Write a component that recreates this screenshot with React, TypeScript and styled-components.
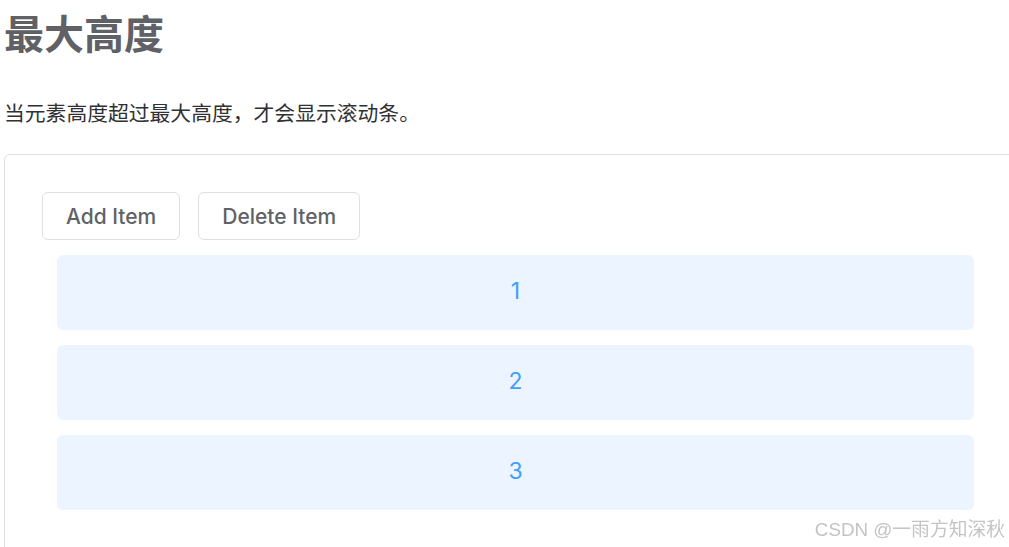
import React, { useState } from "react";
import styled, { createGlobalStyle } from "styled-components";

const GlobalStyle = createGlobalStyle`
  html, body {
    margin: 0;
    padding: 0;
    background: #ffffff;
    overflow: hidden;
  }
  body {
    font-family: Inter, "Noto Sans CJK SC", sans-serif;
  }
`;

const App = () => {
  const [items, setItems] = useState([1, 2, 3]);

  const addItem = () => setItems([...items, items.length + 1]);
  const deleteItem = () => setItems(items.slice(0, -1));

  return (
    <>
      <GlobalStyle />
      <Page>
        <Title>最大高度</Title>
        <Description>当元素高度超过最大高度，才会显示滚动条。</Description>
        <DemoPanel>
          <Toolbar>
            <Button onClick={addItem}>Add Item</Button>
            <Button onClick={deleteItem}>Delete Item</Button>
          </Toolbar>
          <List>
            {items.map((n) => (
              <ListItem key={n}>{n}</ListItem>
            ))}
          </List>
        </DemoPanel>
      </Page>
      <Watermark>CSDN @一雨方知深秋</Watermark>
    </>
  );
};

const Page = styled.div`
  padding: 0 0 0 4px;
  width: 1024px;
`;

const Title = styled.h2`
  margin: 0;
  padding-top: 9px;
  font-family: "Noto Sans CJK SC", sans-serif;
  font-size: 40px;
  line-height: 46px;
  font-weight: 700;
  color: #5f6166;
`;

const Description = styled.p`
  margin: 43px 0 0;
  font-family: "Noto Sans CJK SC", sans-serif;
  font-size: 20.8px;
  line-height: 28px;
  color: #303133;
`;

const DemoPanel = styled.div`
  margin-top: 28px;
  border: 1px solid #dcdfe6;
  border-radius: 6px;
  padding: 37px 38px 60px 37px;
`;

const Toolbar = styled.div`
  display: flex;
  gap: 18px;
`;

const Button = styled.button`
  height: 48px;
  padding: 0 23px;
  border: 1px solid #dcdfe6;
  border-radius: 6px;
  background: #ffffff;
  color: #606266;
  font-family: Inter, sans-serif;
  font-size: 21px;
  font-weight: 500;
  cursor: pointer;
`;

const List = styled.div`
  display: flex;
  flex-direction: column;
  gap: 15px;
  margin: 15px 15px 0;
`;

const ListItem = styled.div`
  height: 75px;
  padding-bottom: 3px;
  box-sizing: border-box;
  display: flex;
  align-items: center;
  justify-content: center;
  border-radius: 6px;
  background: #ecf5ff;
  color: #409eff;
  font-family: Inter, sans-serif;
  font-size: 23px;
`;

const Watermark = styled.div`
  position: fixed;
  right: 4px;
  bottom: 6px;
  font-family: "Liberation Sans", "Noto Sans CJK SC", sans-serif;
  font-size: 18.8px;
  color: #c4c4c4;
`;

export default App;
